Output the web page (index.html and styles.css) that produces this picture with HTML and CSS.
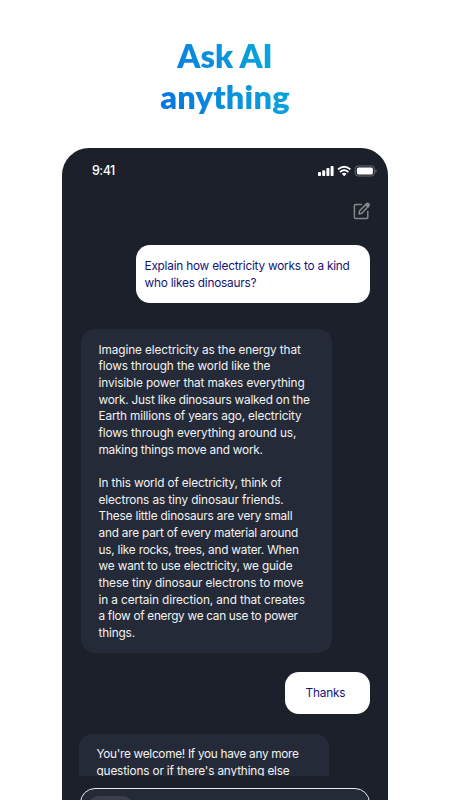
FILE: index.html
```html
<!DOCTYPE html>
<html lang="en">
<head>
  <meta charset="UTF-8">
  <meta name="viewport" content="width=device-width, initial-scale=1.0">
  <title>Ask AI anything</title>
  <link rel="stylesheet" href="styles.css">
</head>
<body>
  <h1 class="headline">Ask AI<br><span class="wide">anything</span></h1>

  <div class="phone">
    <div class="status-bar">
      <span class="time">9:41</span>
      <svg class="status-icons" width="60" height="12" viewBox="0 0 60 12">
        <g fill="#fff">
          <rect x="0" y="7" width="3" height="4" rx=".8"/>
          <rect x="4.2" y="5.2" width="3" height="5.8" rx=".8"/>
          <rect x="8.4" y="3" width="3" height="8" rx=".8"/>
          <rect x="12.6" y="1" width="3" height="10" rx=".8"/>
          <rect x="38.9" y="2.4" width="16" height="7.2" rx="1.6"/>
          <path d="M26.2 11.2 L23.8 8.7 Q26.2 6.8 28.6 8.7 Z"/>
        </g>
        <g fill="none" stroke="#fff" stroke-width="1.8">
          <path d="M20 4.4 Q26.2 -1 32.4 4.4"/>
          <path d="M22 7 Q26.2 3.2 30.4 7"/>
        </g>
        <rect x="37.2" y="1" width="19.2" height="10" rx="2.8" fill="none" stroke="#666970"/>
        <path d="M57.4 4.2 Q60 6 57.4 7.8 Z" fill="#666970"/>
      </svg>
    </div>

    <div class="toolbar">
      <svg class="compose" width="18" height="18" viewBox="0 0 18 18" fill="none" stroke="#85878b" stroke-width="1.5" stroke-linejoin="round" stroke-linecap="round">
        <path d="M8.2 2.6 H2.6 Q1.4 2.6 1.4 3.8 V15.2 Q1.4 16.4 2.6 16.4 H13.6 Q14.8 16.4 14.8 15.2 V9.4"/>
        <path d="M6 11.9 L6.6 8.8 L13.5 1.9 Q14.5 .9 15.6 1.9 Q16.7 3 15.7 4.1 L8.9 11.2 Z"/>
        <path d="M12.6 2.8 L14.8 5 L15.6 3 L14.4 2 Z" fill="#85878b"/>
      </svg>
    </div>

    <div class="chat">
      <div class="message user">
        <p><span class="tight">Explain how electricity works to a kind<br>
        who likes dinosaurs?</span></p>
      </div>

      <div class="message bot">
        <p><span class="loose">Imagine electricity as the energy that<br>
        flows through the world like the<br>
        invisible power that makes everything</span><br>
        <span class="tight">work. Just like dinosaurs walked on the</span><br>
        Earth millions of years ago, electricity<br>
        <span class="loose">flows through everything around us,</span><br>
        <span class="tight">making things move and work.</span></p>
        <p>In this world of electricity, think of<br>
        <span class="loose">electrons as tiny dinosaur friends.</span><br>
        These little dinosaurs are very small<br>
        <span class="tight">and are part of every material around<br>
        us, like rocks, trees, and water. When</span><br>
        we want to use electricity, we guide<br>
        <span class="loose">these tiny dinosaur electrons to move<br>
        in a certain direction, and that creates</span><br>
        <span class="tighter">a flow of energy we can use to power</span><br>
        things.</p>
      </div>

      <div class="message user thanks">
        <p>Thanks</p>
      </div>

      <div class="message bot last">
        <p><span class="tighter">You're welcome! If you have any more</span><br>
        questions or if there's anything else</p>
      </div>
    </div>

    <div class="composer">
      <div class="chip"></div>
    </div>
  </div>
</body>
</html>
```

FILE: styles.css
```css
* {
  box-sizing: border-box;
}
body {
  margin: 0;
  height: 800px;
  overflow: hidden;
  background: #fff;
  font-family: Inter, "Liberation Sans", sans-serif;
}
.headline {
  width: 134px;
  height: 124px;
  margin: 0 auto 0 158px;
  padding-top: 35px;
  font-family: Lato, sans-serif;
  font-size: 32.5px;
  font-weight: 800;
  line-height: 41px;
  text-align: center;
  white-space: nowrap;
  color: transparent;
  background: linear-gradient(65deg, #0878df 10%, #0b91dc 45%, #08abda 85%);
  -webkit-background-clip: text;
  background-clip: text;
}
.wide {
  letter-spacing: 0.2px;
}
.phone {
  width: 326px;
  height: 652px;
  margin: 24px 0 0 62px;
  padding: 0 18.5px 0 18px;
  overflow: hidden;
  background: #1c202b;
  border-radius: 27px 27px 0 0;
}
.status-bar {
  display: flex;
  justify-content: space-between;
  align-items: center;
  height: 45px;
}
.time {
  padding-left: 12px;
  font-size: 12.5px;
  font-weight: 500;
  letter-spacing: -0.5px;
  color: #fff;
}
.status-icons {
  margin-right: -8px;
}
.toolbar {
  display: flex;
  justify-content: flex-end;
  height: 52px;
  padding-top: 9px;
}
.compose {
  margin-right: -1.5px;
}
.chat {
  display: flex;
  flex-direction: column;
  height: 531px;
  margin-left: -1px;
  overflow: hidden;
}
.message {
  flex: none;
  font-size: 11.8px;
  line-height: 16.67px;
  letter-spacing: -0.16px;
  white-space: nowrap;
}
.message p {
  margin: 0;
}
.message p + p {
  margin-top: 16.67px;
}
.loose {
  letter-spacing: -0.11px;
}
.tight {
  letter-spacing: -0.21px;
}
.tighter {
  letter-spacing: -0.29px;
}
.user {
  align-self: flex-end;
  width: 234px;
  height: 58px;
  padding: 13px 0 0 9px;
  background: #fff;
  border-radius: 14px;
  color: #10147a;
}
.bot {
  width: 250.5px;
  height: 324px;
  margin: 26px 0 0 2px;
  padding: 12.5px 0 0 17.5px;
  background: #252a38;
  border-radius: 14px;
  color: #f2f2f2;
}
.thanks {
  width: 84.5px;
  height: 42px;
  margin-top: 19px;
  padding: 12.5px 0 0 20.5px;
}
.last {
  width: 250px;
  margin: 20px 0 0 0;
  padding-top: 12px;
}
.composer {
  height: 60px;
  margin-top: 12px;
  padding: 7px 8px;
  background: #252a38;
  border: 1px solid #e9eaec;
  border-radius: 15px;
}
.chip {
  width: 43px;
  height: 26px;
  background: #3b3f4b;
  border-radius: 9px;
}
```
